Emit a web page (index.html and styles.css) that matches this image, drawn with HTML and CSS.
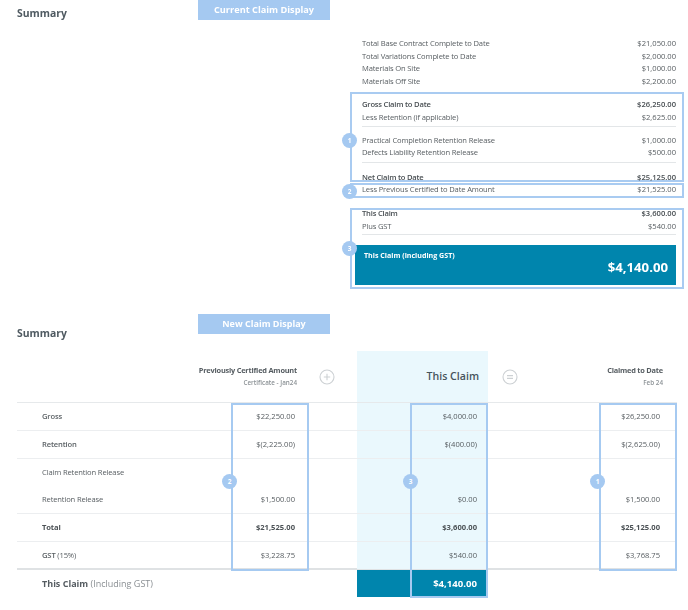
FILE: index.html
```html
<!DOCTYPE html>
<html lang="en">
<head>
<meta charset="utf-8">
<title>Claim Summary</title>
<link rel="stylesheet" href="styles.css">
</head>
<body>
<main class="page">
  <section class="current">
    <header class="top top-current">
      <h2 class="title title-current">Summary</h2>
      <div class="tag tag-current">Current Claim Display</div>
    </header>
    <div class="plain">
      <div class="row"><span>Total Base Contract Complete to Date</span><span>$21,050.00</span></div>
      <div class="row"><span>Total Variations Complete to Date</span><span>$2,000.00</span></div>
      <div class="row"><span>Materials On Site</span><span>$1,000.00</span></div>
      <div class="row"><span>Materials Off Site</span><span>$2,200.00</span></div>
    </div>
    <div class="group group-one">
      <span class="badge badge-one">1</span>
      <div class="row strong"><span>Gross Claim to Date</span><span>$26,250.00</span></div>
      <div class="row"><span>Less Retention (if applicable)</span><span>$2,625.00</span></div>
      <div class="divider divider-a"></div>
      <div class="row"><span>Practical Completion Retention Release</span><span>$1,000.00</span></div>
      <div class="row"><span>Defects Liability Retention Release</span><span>$500.00</span></div>
      <div class="divider divider-b"></div>
      <div class="row strong"><span>Net Claim to Date</span><span>$25,125.00</span></div>
    </div>
    <div class="group group-two">
      <span class="badge badge-two">2</span>
      <div class="row"><span>Less Previous Certified to Date Amount</span><span>$21,525.00</span></div>
    </div>
    <div class="group group-three">
      <span class="badge badge-three">3</span>
      <div class="row strong"><span>This Claim</span><span>$3,600.00</span></div>
      <div class="row"><span>Plus GST</span><span>$540.00</span></div>
      <div class="divider divider-c"></div>
      <div class="total-card">
        <div class="total-label">This Claim (including GST)</div>
        <div class="total-value">$4,140.00</div>
      </div>
    </div>
  </section>

  <section class="new">
    <header class="top top-new">
      <h2 class="title title-new">Summary</h2>
      <div class="tag tag-new">New Claim Display</div>
    </header>
    <div class="table">
      <div class="grid head">
        <div class="head-cell head-prev"><strong>Previously Certified Amount</strong><small>Certificate - Jan24</small></div>
        <div class="op op-plus">
          <svg class="op-icon" viewBox="0 0 16 16"><circle cx="8" cy="8" r="7" /><path d="M8 4.8v6.4M4.8 8h6.4" /></svg>
        </div>
        <div class="now head-now">This Claim</div>
        <div class="op op-equal">
          <svg class="op-icon" viewBox="0 0 16 16"><circle cx="8" cy="8" r="7" /><path d="M5 6.6h6M5 9.4h6" /></svg>
        </div>
        <div class="head-cell head-date"><strong>Claimed to Date</strong><small>Feb 24</small></div>
      </div>
      <div class="grid line med"><div class="label">Gross</div><div class="val">$22,250.00</div><div></div><div class="now">$4,000.00</div><div></div><div class="val">$26,250.00</div></div>
      <div class="grid line med"><div class="label">Retention</div><div class="val">$(2,225.00)</div><div></div><div class="now">$(400.00)</div><div></div><div class="val">$(2,625.00)</div></div>
      <div class="grid half"><div class="label">Claim Retention Release</div><div class="val"></div><div></div><div class="now"></div><div></div><div class="val"></div></div>
      <div class="grid half line"><div class="label">Retention Release</div><div class="val">$1,500.00</div><div></div><div class="now">$0.00</div><div></div><div class="val">$1,500.00</div></div>
      <div class="grid line bold"><div class="label">Total</div><div class="val">$21,525.00</div><div></div><div class="now">$3,600.00</div><div></div><div class="val">$25,125.00</div></div>
      <div class="grid line-heavy"><div class="label"><b class="med-text">GST</b> (15%)</div><div class="val">$3,228.75</div><div></div><div class="now">$540.00</div><div></div><div class="val">$3,768.75</div></div>
      <div class="grid foot"><div class="foot-label"><b>This Claim</b> (Including GST)</div><div></div><div></div><div class="now foot-now">$4,140.00</div></div>

      <div class="mark mark-prev"><span class="badge badge-col">2</span></div>
      <div class="mark mark-now"><span class="badge badge-col">3</span></div>
      <div class="mark mark-date"><span class="badge badge-col">1</span></div>
    </div>
  </section>
</main>
</body>
</html>
```

FILE: styles.css
```css
* { box-sizing: border-box; }
html, body { margin: 0; padding: 0; background: #fff; }
body {
  font-family: "Open Sans", "Noto Sans", sans-serif;
  color: #575d61;
  font-size: 7.6px;
}
.page { width: 688px; height: 610px; overflow: hidden; filter: blur(0.35px); }

/* shared header */
.top { display: flex; align-items: flex-start; padding-left: 17px; }
.title { margin: 0; width: 181px; font-size: 10.4px; font-weight: 700; color: #4f5a61; line-height: 14px; }
.title-current { margin-top: 6px; }
.title-new { margin-top: 12px; }
.tag {
  width: 132px;
  background: #a5c9f1;
  color: #fff;
  font-weight: 700;
  text-align: center;
}
.tag-current { height: 20px; line-height: 19px; font-size: 9.2px; }
.tag-new { height: 20px; line-height: 19px; font-size: 9px; }
.top-current { height: 20px; }
.top-new { height: 37px; }

/* current display */
.plain { margin: 17px 12px 0 362px; }
.row { display: flex; justify-content: space-between; height: 12.7px; line-height: 12.7px; white-space: nowrap; }
.row > span:first-child { letter-spacing: -0.15px; }
.strong { font-weight: 600; color: #484e52; }
.row.strong > span:first-child { letter-spacing: -0.2px; }
.group {
  position: relative;
  margin-left: 350px;
  width: 334px;
  border: 2px solid #a9cbf1;
  padding-left: 10px;
  padding-right: 6px;
}
.group-one { margin-top: 4px; height: 90px; padding-top: 4.6px; }
.group-two { margin-top: 1px; height: 15px; }
.group-two .row { margin-top: -2px; }
.group-three { margin-top: 10px; height: 81px; }
.group-three .row:first-of-type { margin-top: -3px; margin-bottom: 0.6px; }
.divider { height: 1px; background: #e3e6e8; }
.divider-a { margin: 2px 0 7px; }
.divider-b { margin: 2.5px 0 8.5px; }
.divider-c { margin: 1.4px 0 10px; }
.total-card {
  margin-left: -7px;
  height: 40px;
  background: #0085ad;
  color: #fff;
  padding: 4px 8px 0 9px;
}
.total-label { font-weight: 700; font-size: 7.1px; line-height: 12px; }
.total-value { text-align: right; font-size: 13.2px; font-weight: 700; line-height: 18px; margin-top: -3px; }

.badge {
  position: absolute;
  width: 15px;
  height: 15px;
  border-radius: 50%;
  background: #a5c9f1;
  color: #fff;
  font-size: 6.5px;
  font-weight: 700;
  line-height: 15px;
  text-align: center;
}
.badge-one { left: -10px; top: 39px; }
.badge-two { left: -10px; top: -1px; }
.badge-three { left: -10px; top: 31px; }

/* new display */
.new { margin-top: 25px; }
.table { position: relative; margin-left: 17px; width: 660px; }
.grid {
  display: grid;
  grid-template-columns: 214px 77px 49px 131px 112px 77px;
  height: 28px;
  align-items: stretch;
  line-height: 27px;
}
.head { height: 52px; border-bottom: 1px solid #e6e9eb; grid-template-columns: 291px 49px 131px 112px 77px; }
.head-cell { display: flex; flex-direction: column; align-items: flex-end; padding-top: 14px; line-height: 11px; white-space: nowrap; }
.head-cell strong { font-size: 7.4px; letter-spacing: -0.22px; color: #555c61; font-weight: 700; }
.head-cell small { font-size: 6.3px; color: #8c9296; font-weight: 600; margin-top: 1px; }
.head-prev { padding-right: 11px; }
.head-date { padding-right: 14px; }
.op { display: flex; align-items: center; padding-top: 1px; }
.op-plus { padding-left: 11px; }
.op-equal { padding-left: 14px; }
.op-icon { width: 16px; height: 16px; fill: none; stroke: #cdd1d4; stroke-width: 1.1; }

.now { background: #eaf8fd; text-align: right; padding-right: 11px; }
.head-now { font-size: 10.6px; font-weight: 600; color: #46535b; line-height: 50px; padding-right: 9px; }
.label { padding-left: 25px; letter-spacing: -0.15px; }
.val { text-align: right; padding-right: 13px; }
.grid > :nth-child(6).val { padding-right: 17px; }
.line { border-bottom: 1px solid #eceef0; }
.half { height: 27.5px; }
.med .label { font-weight: 600; color: #5c6266; }
.med-text { font-weight: 600; }
.bold { font-weight: 700; color: #4c5256; }
.line-heavy { border-bottom: 2px solid #dfe2e4; }
.foot { height: 27px; }
.foot-label { padding-left: 25px; font-size: 9px; color: #8a8f93; line-height: 27px; grid-column: 1; white-space: nowrap; }
.foot-label b { color: #555c61; font-weight: 700; }
.now.foot-now { background: #0085ad; color: #fff; font-size: 9.6px; font-weight: 700; }

.mark { position: absolute; top: 52px; width: 78px; height: 168px; border: 2px solid #a6caf1; }
.mark-prev { left: 214px; }
.mark-now { left: 393px; height: 195px; }
.mark-date { left: 582px; }
.badge-col { top: 69px; left: -11px; }
.mark-now .badge-col { left: -9px; }
```
